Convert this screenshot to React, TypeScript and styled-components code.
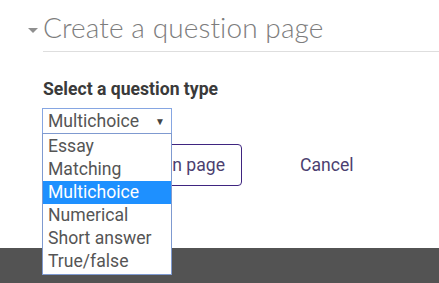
import React from 'react';
import styled, {createGlobalStyle} from 'styled-components';

const GlobalStyle = createGlobalStyle`
	html, body {
		margin: 0;
		padding: 0;
		background: #fff;
		font-family: Roboto, 'Liberation Sans', sans-serif;
	}
`;

const Page = styled.div`
	position: relative;
	width: 439px;
	height: 283px;
	overflow: hidden;
	display: flex;
	flex-direction: column;
`;

const Main = styled.div`
	flex: 1;
	padding: 13px 0 0 28px;
`;

const Legend = styled.div`
	display: flex;
	align-items: flex-start;
`;

const Caret = styled.span`
	width: 0;
	height: 0;
	margin: 15px 5px 0 0;
	border-left: 5px solid transparent;
	border-right: 5px solid transparent;
	border-top: 5px solid #8f8f8f;
`;

const Title = styled.h2`
	flex: 1;
	margin: 0;
	padding-bottom: 10px;
	border-bottom: 1px solid #dedede;
	font-family: Lato, 'Open Sans', sans-serif;
	font-weight: 300;
	font-size: 28px;
	line-height: 28px;
	color: #7d7d7d;
	letter-spacing: 0.1px;
`;

const Body = styled.div`
	padding-left: 15px;
`;

const Label = styled.div`
	margin-top: 27px;
	font-size: 17.6px;
	font-weight: 700;
	color: #3a3a3a;
	line-height: 20px;
`;

const SelectWrap = styled.div`
	position: relative;
	width: 130px;
	margin-top: 9px;
	margin-left: -1px;
`;

const SelectBox = styled.div`
	box-sizing: border-box;
	height: 26px;
	border: 1px solid #86a6e2;
	display: flex;
	align-items: center;
	justify-content: space-between;
	padding: 0 6px 0 5px;
	font-size: 17.6px;
	color: #555;
`;

const Arrow = styled.span`
	font-size: 10px;
	color: #444;
`;

const Options = styled.ul`
	position: absolute;
	top: 25px;
	left: 0;
	z-index: 2;
	box-sizing: border-box;
	width: 130px;
	margin: 0;
	padding: 1px 0;
	list-style: none;
	background: #fff;
	border: 1px solid #7f9ad0;
`;

const Option = styled.li<{$active?: boolean}>`
	height: 23px;
	line-height: 23px;
	padding-left: 5px;
	font-size: 17.6px;
	color: ${p => (p.$active ? '#fff' : '#555')};
	background: ${p => (p.$active ? '#1e90ff' : 'transparent')};
`;

const Actions = styled.div`
	display: flex;
	align-items: center;
	margin-top: 10px;
`;

const Submit = styled.button`
	box-sizing: border-box;
	height: 42px;
	width: 199px;
	padding: 0 16px 0 0;
	text-align: right;
	border: 1px solid #3f2580;
	border-radius: 4px;
	background: #fff;
	font-family: Roboto, 'Liberation Sans', sans-serif;
	font-size: 17.6px;
	color: #4c3f70;
`;

const Cancel = styled.span`
	margin-left: 58px;
	font-size: 17.6px;
	color: #4c3f70;
`;

const Footer = styled.div`
	height: 35px;
	background: #535353;
`;

const types = ['Essay', 'Matching', 'Multichoice', 'Numerical', 'Short answer', 'True/false'];

const App = (): JSX.Element => (
	<Page>
		<GlobalStyle/>
		<Main>
			<Legend>
				<Caret/>
				<Title>Create a question page</Title>
			</Legend>
			<Body>
				<Label>Select a question type</Label>
				<SelectWrap>
					<SelectBox>
						Multichoice
						<Arrow>▼</Arrow>
					</SelectBox>
					<Options>
						{types.map(t => (
							<Option key={t} $active={t === 'Multichoice'}>{t}</Option>
						))}
					</Options>
				</SelectWrap>
				<Actions>
					<Submit type="button">Add a question page</Submit>
					<Cancel>Cancel</Cancel>
				</Actions>
			</Body>
		</Main>
		<Footer/>
	</Page>
);

export default App;
